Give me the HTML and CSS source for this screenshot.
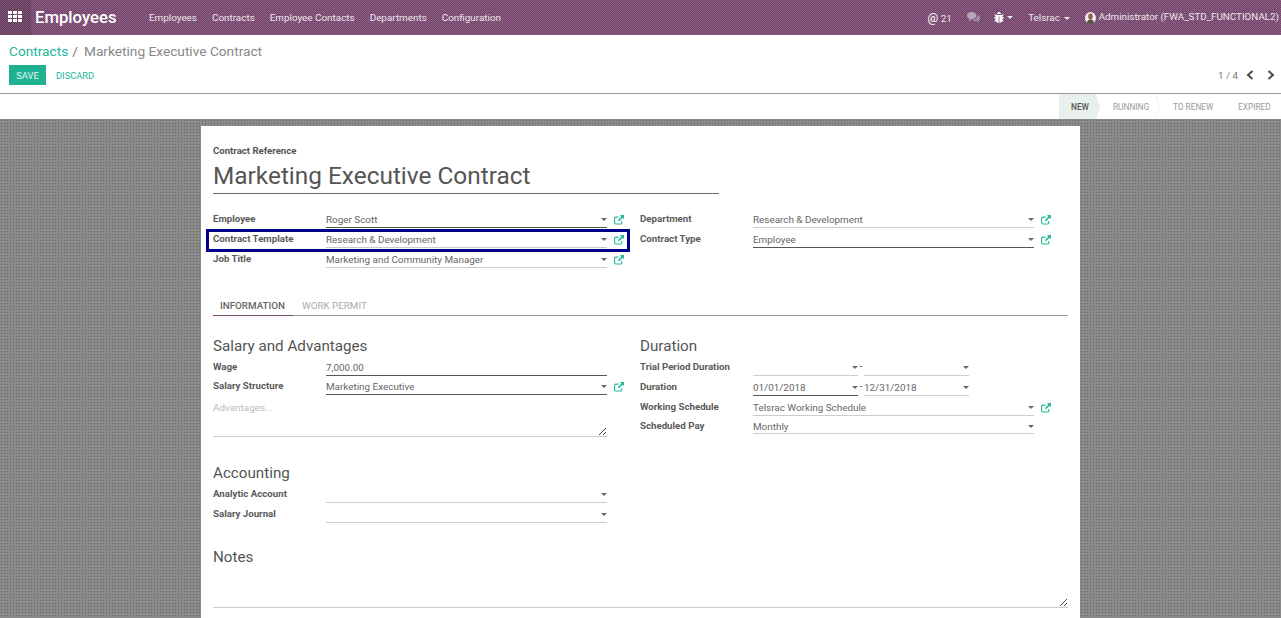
FILE: index.html
```html
<!DOCTYPE html>
<html lang="en">
<head>
    <meta charset="UTF-8">
    <title>Marketing Executive Contract</title>
    <link rel="stylesheet" href="styles.css">
</head>
<body>

<nav class="navbar">
    <a class="apps-btn">
        <svg width="14" height="11" viewBox="0 0 14 11"><path fill="#fff" d="M0 0h4v3H0zM5 0h4v3H5zM10 0h4v3h-4zM0 4h4v3H0zM5 4h4v3H5zM10 4h4v3h-4zM0 8h4v3H0zM5 8h4v3H5zM10 8h4v3h-4z"/></svg>
    </a>
    <span class="brand">Employees</span>
    <ul class="menu">
        <li>Employees</li>
        <li>Contracts</li>
        <li>Employee Contacts</li>
        <li>Departments</li>
        <li>Configuration</li>
    </ul>
    <ul class="menu menu-right">
        <li class="mentions"><span class="at">@</span> 21</li>
        <li class="chat">
            <svg width="13" height="11" viewBox="0 0 14 11" preserveAspectRatio="none"><path fill="#b9a3b4" d="M5 0c3 0 5 1.500 5 3.500S8 7 5 7L2 9l.6-2.500C1 6 0 5 0 3.500 0 1.500 2 0 5 0z"/><path fill="#a58da0" d="M11 3c2 .5 3 1.500 3 3 0 1-.6 2-1.600 2.500L13 10.500 10 9c-2 0-3.500-.5-4.500-1.500 3.500 0 6-1.500 5.500-4.500z"/></svg>
        </li>
        <li class="bug">
            <svg width="10" height="11" viewBox="0 0 10 11"><path fill="#fff" d="M3 2c0-1 1-2 2-2s2 1 2 2zM2 3h6l1-1 .7.700L8.500 4v1.500H10v1H8.500V8l1.200 1.200-.7.700L8 9c-.5 1-1.500 2-2.600 2V4.500h-.8V11C3.500 11 2.500 10 2 9L1 9.900l-.7-.7L1.500 8V6.500H0v-1h1.500V4L.3 2.700 1 2z"/></svg>
            <i class="caret"></i>
        </li>
        <li>Telsrac <i class="caret"></i></li>
        <li class="user">
            <svg width="11" height="12" viewBox="0 0 11 12"><ellipse cx="5.500" cy="6" rx="5.500" ry="6" fill="#f3eeee"/><ellipse cx="5.500" cy="4.500" rx="2.300" ry="3" fill="#8a6650"/><path fill="#5b4a48" d="M1.800 11c.4-2.500 2-3.500 3.700-3.500s3.300 1 3.700 3.500c-1 .7-2.300 1-3.700 1s-2.700-.3-3.700-1z"/></svg>
            Administrator (FWA_STD_FUNCTIONAL2)
        </li>
    </ul>
</nav>

<div class="control-panel">
    <div class="breadcrumb"><a>Contracts</a><span class="sep">/</span><span>Marketing Executive Contract</span></div>
    <div class="cp-row">
        <div class="cp-buttons">
            <button class="btn-save">SAVE</button>
            <button class="btn-discard">DISCARD</button>
        </div>
        <div class="pager">
            <span>1 / 4</span>
            <svg width="8" height="10" viewBox="0 0 8 10"><path fill="none" stroke="#4c4c4c" stroke-width="2" d="M6.500 1 2 5l4.500 4"/></svg>
            <svg width="8" height="10" viewBox="0 0 8 10"><path fill="none" stroke="#4c4c4c" stroke-width="2" d="M1.500 1 6 5 1.500 9"/></svg>
        </div>
    </div>
</div>

<div class="statusbar">
    <div class="stage stage-active">NEW</div>
    <div class="stage stage-running">RUNNING</div>
    <div class="stage stage-renew">TO RENEW</div>
    <div class="stage stage-expired">EXPIRED</div>
</div>

<main class="content">
    <div class="sheet">
        <div class="ref-label">Contract Reference</div>
        <div class="title">Marketing Executive Contract</div>

        <div class="columns top-fields">
            <div class="group">
                <div class="field"><label>Employee</label><div class="input">Roger Scott<i class="caret"></i></div><svg class="ext" width="10" height="10" viewBox="0 0 11 11"><use href="#ext-icon"/></svg></div>
                <div class="field field-marked"><label>Contract Template</label><div class="input thin">Research &amp; Development<i class="caret"></i></div><svg class="ext" width="10" height="10" viewBox="0 0 11 11"><use href="#ext-icon"/></svg></div>
                <div class="field"><label>Job Title</label><div class="input thin">Marketing and Community Manager<i class="caret"></i></div><svg class="ext" width="10" height="10" viewBox="0 0 11 11"><use href="#ext-icon"/></svg></div>
            </div>
            <div class="group">
                <div class="field"><label>Department</label><div class="input thin">Research &amp; Development<i class="caret"></i></div><svg class="ext" width="10" height="10" viewBox="0 0 11 11"><use href="#ext-icon"/></svg></div>
                <div class="field"><label>Contract Type</label><div class="input">Employee<i class="caret"></i></div><svg class="ext" width="10" height="10" viewBox="0 0 11 11"><use href="#ext-icon"/></svg></div>
            </div>
        </div>

        <div class="tabs">
            <span class="tab tab-active">INFORMATION</span>
            <span class="tab">WORK PERMIT</span>
        </div>

        <div class="columns">
            <div class="group">
                <h3>Salary and Advantages</h3>
                <div class="field field-tight"><label>Wage</label><div class="input">7,000.00</div></div>
                <div class="field field-tight"><label>Salary Structure</label><div class="input">Marketing Executive<i class="caret"></i></div><svg class="ext" width="10" height="10" viewBox="0 0 11 11"><use href="#ext-icon"/></svg></div>
                <div class="textarea advantages">Advantages...<svg class="grip" width="7" height="7" viewBox="0 0 7 7"><path stroke="#444" fill="none" d="M0 7 7 0M4 7l3-3"/></svg></div>

                <h3 class="accounting">Accounting</h3>
                <div class="field"><label>Analytic Account</label><div class="input thin"><i class="caret"></i></div></div>
                <div class="field"><label>Salary Journal</label><div class="input thin"><i class="caret"></i></div></div>
            </div>
            <div class="group">
                <h3>Duration</h3>
                <div class="field"><label>Trial Period Duration</label><div class="date thin"><i class="caret"></i></div><span class="dash">-</span><div class="date thin"><i class="caret"></i></div></div>
                <div class="field"><label>Duration</label><div class="date">01/01/2018<i class="caret"></i></div><span class="dash">-</span><div class="date thin">12/31/2018<i class="caret"></i></div></div>
                <div class="field field-tight"><label>Working Schedule</label><div class="input thin">Telsrac Working Schedule<i class="caret"></i></div><svg class="ext" width="10" height="10" viewBox="0 0 11 11"><use href="#ext-icon"/></svg></div>
                <div class="field field-tight"><label>Scheduled Pay</label><div class="input thin input-short">Monthly<i class="caret"></i></div></div>
            </div>
        </div>

        <h3 class="notes-head">Notes</h3>
        <div class="textarea notes"><svg class="grip" width="7" height="7" viewBox="0 0 7 7"><path stroke="#444" fill="none" d="M0 7 7 0M4 7l3-3"/></svg></div>
    </div>
</main>

<svg width="0" height="0" class="defs">
    <symbol id="ext-icon" viewBox="0 0 11 11">
        <path fill="none" stroke="#21b799" stroke-width="1.200" d="M8.500 6.500v2.200c0 .7-.5 1.200-1.200 1.200H2C1.200 9.900.7 9.400.7 8.700V3.500c0-.7.500-1.200 1.300-1.200h3"/>
        <path fill="#21b799" d="M6.500 0H11v4.500L9.500 3 5.500 7 4.200 5.700l4-4z"/>
    </symbol>
</svg>

</body>
</html>
```

FILE: styles.css
```css
html, body {
    margin: 0;
    padding: 0;
    height: 618px;
    overflow: hidden;
}
body {
    font-family: Roboto, sans-serif;
    font-size: 10px;
    color: #555;
    background: #fff;
    display: flex;
    flex-direction: column;
}
.defs {
    display: block;
    height: 0;
}
.caret {
    display: inline-block;
    border-top: 3px solid currentColor;
    border-left: 3px solid transparent;
    border-right: 3px solid transparent;
    vertical-align: middle;
}

/* top bar */
.navbar {
    height: 35px;
    flex: none;
    display: flex;
    align-items: center;
    color: #eee5ec;
    background: repeating-conic-gradient(#6f4166 0 25%, #8f6186 0 50%) 0 0 / 2px 2px;
}
.apps-btn {
    width: 31px;
    height: 35px;
    box-sizing: border-box;
    padding: 0 2px 2px 0;
    display: flex;
    align-items: center;
    justify-content: center;
    background: rgba(0, 0, 0, .12);
}
.brand {
    font-size: 16.700px;
    font-weight: 500;
    color: #fff;
    margin-left: 4px;
    width: 114px;
}
.menu {
    list-style: none;
    display: flex;
    align-items: center;
    gap: 15px;
    margin: 0;
    padding: 0;
    font-size: 9.900px;
}
.menu-right {
    margin-left: auto;
    padding-right: 2px;
    font-size: 9.800px;
}
.menu-right .caret {
    margin-left: 2px;
}
.at {
    font-size: 12px;
    font-weight: 500;
}
.bug svg, .user svg, .chat svg {
    vertical-align: middle;
}
.bug .caret {
    margin-left: 1px;
}
.chat {
    margin-right: -1px;
}

/* control panel */
.control-panel {
    flex: none;
    height: 59px;
    box-sizing: border-box;
    padding: 8px 6px 0 9px;
    border-bottom: 1px solid #999;
}
.breadcrumb {
    font-size: 13.700px;
    line-height: 17px;
    color: #888;
}
.breadcrumb a {
    color: #21b799;
}
.breadcrumb .sep {
    margin: 0 6px 0 4px;
    color: #777;
}
.cp-row {
    display: flex;
    justify-content: space-between;
    align-items: center;
    margin-top: 5px;
}
.cp-buttons {
    display: flex;
    align-items: center;
}
.cp-buttons button {
    font-family: inherit;
    font-size: 9.300px;
    border: none;
    height: 20px;
    padding: 0;
}
.btn-save {
    width: 37px;
    background: #1fb192;
    color: #e6f7f3;
}
.btn-discard {
    margin-left: 10px;
    background: none;
    color: #21b799;
}
.pager {
    display: flex;
    align-items: center;
    gap: 13px;
    color: #777;
    font-size: 9.800px;
}
.pager span {
    margin-right: -5px;
}

/* status bar */
.statusbar {
    flex: none;
    height: 25px;
    display: flex;
    justify-content: flex-end;
    font-size: 8.300px;
    color: #999;
    line-height: 26px;
}
.stage {
    white-space: nowrap;
}
.stage-active {
    width: 41px;
    box-sizing: border-box;
    padding-left: 12px;
    margin-right: 13px;
    font-weight: 500;
    color: #555;
    background: #e8f0ee;
    clip-path: polygon(0 0, 37px 0, 41px 50%, 37px 100%, 0 100%);
}
.stage-running {
    width: 60px;
    position: relative;
}
.stage-running::after {
    content: "";
    position: absolute;
    right: 9px;
    top: 4px;
    width: 16px;
    height: 16px;
    border-top: 1px solid #e4e4e4;
    border-right: 1px solid #e4e4e4;
    transform: scaleX(.35) rotate(45deg);
}
.stage-renew {
    width: 65px;
}
.stage-expired {
    width: 43px;
}

/* form sheet */
.content {
    flex: 1;
    min-height: 0;
    overflow: hidden;
    padding-top: 7px;
    background-color: #8a8a8a;
    background-image: radial-gradient(#666 35%, transparent 40%);
    background-size: 3px 3px;
}
.sheet {
    width: 879px;
    height: 600px;
    box-sizing: border-box;
    margin-left: 201px;
    padding: 19px 12px 0;
    background: #fff;
}
.ref-label {
    font-weight: 700;
    font-size: 9.600px;
    line-height: 12px;
}
.title {
    width: 506px;
    box-sizing: border-box;
    margin-top: 2px;
    height: 35px;
    font-size: 24.400px;
    line-height: 33px;
    color: #555;
    border-bottom: 1px solid #666;
}
.columns {
    display: grid;
    grid-template-columns: 427px 1fr;
}
.top-fields {
    margin-top: 16px;
}
.field {
    display: flex;
    height: 20px;
    box-sizing: border-box;
    align-items: flex-start;
    position: relative;
}
.field label {
    flex: none;
    width: 113px;
    font-weight: 700;
    font-size: 9.700px;
    line-height: 17px;
    color: #5a5a5a;
}
.input, .date {
    box-sizing: border-box;
    height: 18px;
    line-height: 19px;
    color: #666;
    font-size: 9.900px;
    border-bottom: 1px solid #555;
    position: relative;
}
.input {
    width: 281px;
}
.input-short {
    height: 17px;
}
.date {
    width: 105px;
}
.thin {
    border-bottom-color: #ccc;
}
.input .caret, .date .caret {
    position: absolute;
    right: 0;
    top: 8px;
    color: #666;
}
.dash {
    width: 6px;
    line-height: 18px;
    text-align: center;
}
.ext {
    margin: 5px 0 0 7px;
}
.field-tight {
    height: 19px;
}
.field-marked::before {
    content: "";
    position: absolute;
    left: -7px;
    top: -1px;
    width: 424px;
    height: 23px;
    box-sizing: border-box;
    border: 3px solid #00008b;
}

/* tabs */
.tabs {
    display: flex;
    margin-top: 25px;
    height: 21px;
    box-sizing: border-box;
    border-bottom: 1px solid #999;
    font-size: 9.800px;
    line-height: 21px;
}
.tab {
    color: #aaa;
    padding: 0 8px 0 9px;
}
.tab-active {
    color: #666;
    font-weight: 500;
    padding: 0 8px 0 7px;
    border-bottom: 1px solid #7c4f73;
    height: 20px;
}

h3 {
    margin: 21px 0 2px;
    font-weight: 400;
    font-size: 15.200px;
    line-height: 19px;
    color: #555;
}
.textarea {
    box-sizing: border-box;
    position: relative;
    border-bottom: 1px solid #ccc;
}
.advantages {
    width: 394px;
    height: 37px;
    margin-top: 4px;
    padding-top: 2px;
    color: #bbb;
    font-size: 9.900px;
}
.notes {
    height: 41px;
}
.grip {
    position: absolute;
    right: 1px;
    bottom: 1px;
}
h3.accounting {
    margin: 27px 0 2px;
}
h3.notes-head {
    margin: 23px 0 0;
}
```
